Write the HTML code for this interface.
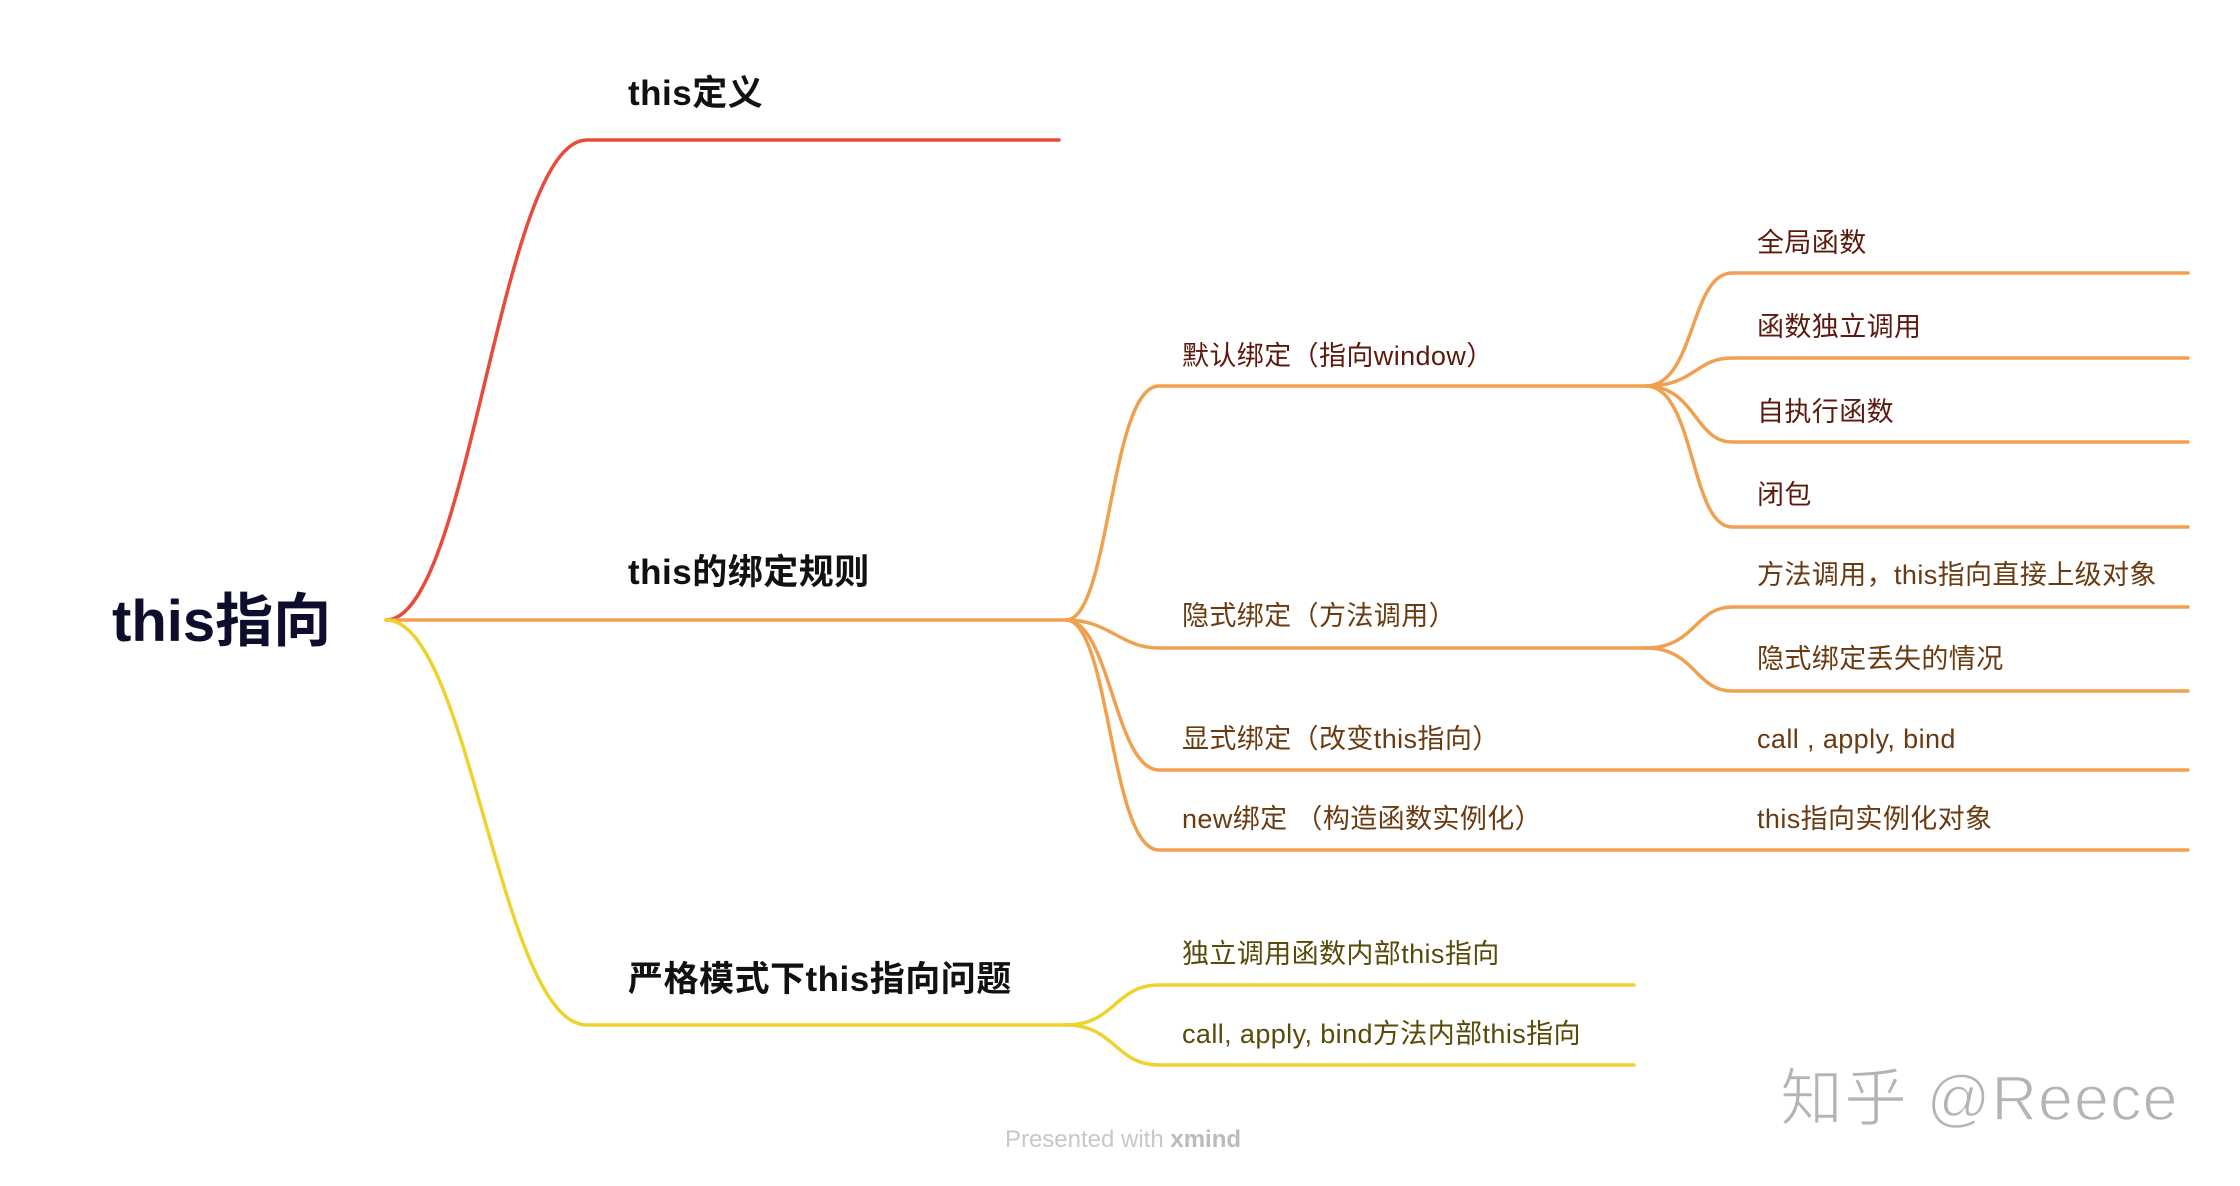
<!DOCTYPE html>
<html><head><meta charset="utf-8"><style>
html,body{margin:0;padding:0;background:#fff;width:2240px;height:1186px;overflow:hidden}
svg{display:block}
text{font-family:"Liberation Sans","Noto Sans CJK SC",sans-serif}
</style></head><body>
<svg width="2240" height="1186" viewBox="0 0 2240 1186" xmlns="http://www.w3.org/2000/svg">
<g fill="none" stroke-width="3.5" stroke-linecap="round">
<path d="M386 620 C470 620 500 140 587 140 L1059 140" stroke="#e84b3c"/>
<path d="M386 620 L1066 620" stroke="#f0a050"/>
<path d="M386 620 C470 620 500 1025 587 1025 L1066 1025" stroke="#eed22e"/>
<g stroke="#f0a050">
<path d="M1066 620 C1110 620 1110 386 1159 386 L1646 386"/>
<path d="M1066 620 C1110 620 1120 648 1159 648 L1646 648"/>
<path d="M1066 620 C1110 620 1115 770 1159 770 L2188 770"/>
<path d="M1066 620 C1110 620 1110 850 1159 850 L2188 850"/>
<path d="M1646 386 C1695 386 1690 273 1732 273 L2188 273"/>
<path d="M1646 386 C1695 386 1695 358 1732 358 L2188 358"/>
<path d="M1646 386 C1695 386 1695 442 1732 442 L2188 442"/>
<path d="M1646 386 C1695 386 1690 527 1732 527 L2188 527"/>
<path d="M1646 648 C1695 648 1695 607 1732 607 L2188 607"/>
<path d="M1646 648 C1695 648 1695 691 1732 691 L2188 691"/>
</g>
<g stroke="#eed22e">
<path d="M1066 1025 C1115 1025 1115 985 1159 985 L1634 985"/>
<path d="M1066 1025 C1115 1025 1115 1065 1159 1065 L1634 1065"/>
</g>
</g>
<text x="112" y="641" font-size="58" font-weight="bold" fill="#0e0e2c">this指向</text>
<g font-size="35" font-weight="bold" fill="#111" letter-spacing="0.5">
<text x="628" y="105">this定义</text>
<text x="628" y="584">this的绑定规则</text>
<text x="628" y="991">严格模式下this指向问题</text>
</g>
<g font-size="27" fill="#5c1a0e" letter-spacing="0.4">
<text x="1182" y="365">默认绑定（指向window）</text>
<text x="1757" y="252">全局函数</text>
<text x="1757" y="336">函数独立调用</text>
<text x="1757" y="421">自执行函数</text>
<text x="1757" y="504">闭包</text>
</g>
<g font-size="27" fill="#6a3a10" letter-spacing="0.4">
<text x="1182" y="625">隐式绑定（方法调用）</text>
<text x="1182" y="748">显式绑定（改变this指向）</text>
<text x="1182" y="828">new绑定 （构造函数实例化）</text>
<text x="1757" y="584">方法调用，this指向直接上级对象</text>
<text x="1757" y="668">隐式绑定丢失的情况</text>
<text x="1757" y="748">call , apply, bind</text>
<text x="1757" y="828">this指向实例化对象</text>
</g>
<g font-size="27" fill="#5a4a08" letter-spacing="0.4">
<text x="1182" y="963">独立调用函数内部this指向</text>
<text x="1182" y="1043">call, apply, bind方法内部this指向</text>
</g>
<text x="1123" y="1147" font-size="24" fill="#c8c8c8" text-anchor="middle">Presented with <tspan font-weight="bold" fill="#bbb">xmind</tspan></text>
<text x="1780" y="1120" font-size="63" fill="#b4b4b4" stroke="#fff" stroke-width="1.5" letter-spacing="1">知乎 @Reece</text>
</svg>
</body></html>
